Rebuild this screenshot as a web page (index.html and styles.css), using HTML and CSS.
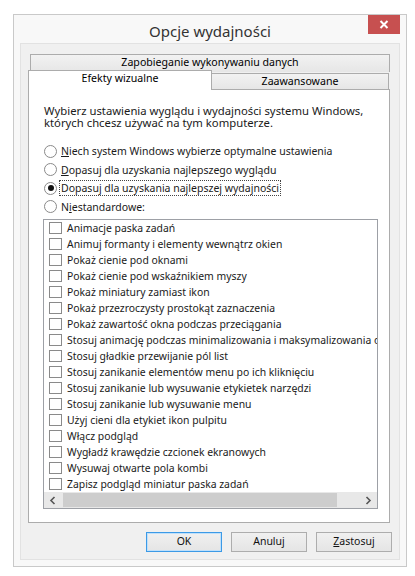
FILE: index.html
```html
<!DOCTYPE html>
<html lang="pl">
<head>
<meta charset="utf-8">
<title>Opcje wydajności</title>
<link rel="stylesheet" href="styles.css">
</head>
<body>
<div class="window">
  <div class="titlebar">
    <span></span>
    <span class="title">Opcje wydajności</span>
    <div class="close-col">
      <div class="close">
        <svg width="10" height="9" viewBox="0 0 10 9"><path d="M1.5 1 L8.5 8 M8.5 1 L1.5 8" stroke="#fff" stroke-width="2" fill="none"/></svg>
      </div>
    </div>
  </div>
  <div class="client">
    <div class="tabs">
      <div class="tabrow back">
        <div class="tab tab-wide">Zapobieganie wykonywaniu danych</div>
      </div>
      <div class="tabrow front">
        <div class="tab tab-sel">Efekty wizualne</div>
        <div class="tab tab-adv">Zaawansowane</div>
      </div>
    </div>
    <div class="panel">
      <div class="intro">
        <div class="intro-line">Wybierz ustawienia wyglądu i wydajności systemu Windows,</div>
        <div class="intro-line">których chcesz używać na tym komputerze.</div>
      </div>
      <div class="radios">
        <div class="radio-row"><span class="radio"></span><span class="label"><u>N</u>iech system Windows wybierze optymalne ustawienia</span></div>
        <div class="radio-row"><span class="radio"></span><span class="label"><u>D</u>opasuj dla uzyskania najlepszego wyglądu</span></div>
        <div class="radio-row"><span class="radio checked"></span><span class="label focus">Dopasuj dla uzyskania najlepszej wydajności</span></div>
        <div class="radio-row"><span class="radio"></span><span class="label">N<u>i</u>estandardowe:</span></div>
      </div>
      <div class="listbox">
        <div class="items">
          <div class="item"><span class="check"></span><span>Animacje paska zadań</span></div>
          <div class="item"><span class="check"></span><span>Animuj formanty i elementy wewnątrz okien</span></div>
          <div class="item"><span class="check"></span><span>Pokaż cienie pod oknami</span></div>
          <div class="item"><span class="check"></span><span>Pokaż cienie pod wskaźnikiem myszy</span></div>
          <div class="item"><span class="check"></span><span>Pokaż miniatury zamiast ikon</span></div>
          <div class="item"><span class="check"></span><span>Pokaż przezroczysty prostokąt zaznaczenia</span></div>
          <div class="item"><span class="check"></span><span>Pokaż zawartość okna podczas przeciągania</span></div>
          <div class="item"><span class="check"></span><span>Stosuj animację podczas minimalizowania i maksymalizowania okien</span></div>
          <div class="item"><span class="check"></span><span>Stosuj gładkie przewijanie pól list</span></div>
          <div class="item"><span class="check"></span><span>Stosuj zanikanie elementów menu po ich kliknięciu</span></div>
          <div class="item"><span class="check"></span><span>Stosuj zanikanie lub wysuwanie etykietek narzędzi</span></div>
          <div class="item"><span class="check"></span><span>Stosuj zanikanie lub wysuwanie menu</span></div>
          <div class="item"><span class="check"></span><span>Użyj cieni dla etykiet ikon pulpitu</span></div>
          <div class="item"><span class="check"></span><span>Włącz podgląd</span></div>
          <div class="item"><span class="check"></span><span>Wygładź krawędzie czcionek ekranowych</span></div>
          <div class="item"><span class="check"></span><span>Wysuwaj otwarte pola kombi</span></div>
          <div class="item"><span class="check"></span><span>Zapisz podgląd miniatur paska zadań</span></div>
        </div>
        <div class="hscroll">
          <div class="arrow"><svg width="7" height="9" viewBox="0 0 7 9"><path d="M5.5 1 L2 4.5 L5.5 8" stroke="#555" stroke-width="1.6" fill="none"/></svg></div>
          <div class="track"><div class="thumb"></div></div>
          <div class="arrow"><svg width="7" height="9" viewBox="0 0 7 9"><path d="M1.5 1 L5 4.5 L1.5 8" stroke="#555" stroke-width="1.6" fill="none"/></svg></div>
        </div>
      </div>
    </div>
    <div class="buttons">
      <div class="btn default">OK</div>
      <div class="btn">Anuluj</div>
      <div class="btn"><u>Z</u>astosuj</div>
    </div>
  </div>
</div>
</body>
</html>
```
FILE: styles.css
```css
* { box-sizing: border-box; }
html, body { margin: 0; padding: 0; background: #fff; }
body {
  font-family: "Noto Sans", "Open Sans", "DejaVu Sans", sans-serif;
  font-size: 10.5px;
  color: #1a1a1a;
}
.window {
  margin: 14px 0 0 13px;
  width: 394px;
  height: 553px;
  border: 1px solid #c9c9c9;
  background: #f8f8f8;
  padding: 0 6px 6px 6px;
  display: flex;
  flex-direction: column;
}
.titlebar {
  height: 28px;
  display: grid;
  grid-template-columns: 1fr auto 1fr;
  align-items: center;
}
.title {
  font-size: 15px;
  color: #333;
  line-height: 28px;
  padding-top: 2px;
}
.close-col {
  align-self: start;
  display: flex;
  justify-content: flex-end;
}
.close {
  width: 32px;
  height: 19px;
  background: #c75050;
  display: flex;
  align-items: center;
  justify-content: center;
}
.client {
  flex: 1;
  background: #f0f0f0;
  border: 1px solid #e2e2e2;
  padding: 10px 9px 0 7px;
  display: flex;
  flex-direction: column;
}
.tabs {
  display: flex;
  flex-direction: column;
}
.tabrow { display: flex; align-items: flex-end; }
.tabrow.back { padding-left: 2px; }
.tabrow.front { margin-top: -2px; }
.tab {
  border: 1px solid #acacac;
  border-bottom: none;
  background: linear-gradient(#f2f2f2, #e6e6e6);
  text-align: center;
  font-size: 10.6px;
  color: #000;
}
.tab-wide {
  width: 361px;
  height: 18px;
  line-height: 15px;
}
.tab-sel {
  width: 184px;
  height: 20px;
  background: #fff;
  line-height: 15px;
  margin-bottom: -1px;
  position: relative;
  z-index: 1;
}
.tab-adv {
  width: 178px;
  height: 16px;
  line-height: 15px;
  margin-left: -1px;
}
.panel {
  width: 362px;
  height: 434px;
  background: #fff;
  border: 1px solid #acacac;
  padding: 15px 0 0 14px;
}
.intro {
  padding-left: 1px;
  font-size: 11.3px;
}
.intro-line {
  height: 12px;
  line-height: 12px;
  white-space: nowrap;
}
.radios {
  margin-top: 13px;
  display: flex;
  flex-direction: column;
}
.radio-row {
  height: 18.5px;
  display: flex;
  align-items: center;
  gap: 2px;
  padding-left: 1px;
}
.radio {
  flex: none;
  width: 13px;
  height: 13px;
  border: 1px solid #8a8a8a;
  border-radius: 50%;
  background: #fff;
  display: flex;
  align-items: center;
  justify-content: center;
}
.radio.checked::after {
  content: "";
  width: 6px;
  height: 6px;
  border-radius: 50%;
  background: #111;
}
.label { line-height: 12px; padding: 1px 1px; border: 1px solid transparent; white-space: nowrap; }
.label.focus { border: 1px dotted #444; }
.listbox {
  margin-top: 3px;
  width: 335px;
  height: 290px;
  border: 1px solid #9da0a6;
  display: flex;
  flex-direction: column;
  overflow: hidden;
  font-size: 10.4px;
}
.items {
  flex: 1;
  display: flex;
  flex-direction: column;
}
.item {
  height: 16px;
  display: flex;
  align-items: center;
  gap: 5px;
  padding-left: 5px;
  white-space: nowrap;
  overflow: hidden;
}
.check {
  flex: none;
  width: 13px;
  height: 12px;
  border: 1px solid #8a8a8a;
  background: #fff;
}
.hscroll {
  height: 16px;
  display: grid;
  grid-template-columns: 17px 1fr 17px;
  background: #e8e8e8;
}
.arrow {
  display: flex;
  align-items: center;
  justify-content: center;
}
.track { padding: 1px 0 1px 2px; }
.thumb {
  width: 274px;
  height: 100%;
  background: #cdcdcd;
}
.buttons {
  margin-top: 9px;
  display: flex;
  justify-content: flex-end;
  gap: 9px;
  margin-right: -2px;
}
.btn {
  width: 76px;
  height: 20px;
  border: 1px solid #adadad;
  background: linear-gradient(#f0f0f0, #e5e5e5);
  text-align: center;
  line-height: 17px;
  color: #111;
}
.btn.default { border: 1px solid #3c9ae6; box-shadow: inset 0 0 0 1px #bfe0fb; }
```
